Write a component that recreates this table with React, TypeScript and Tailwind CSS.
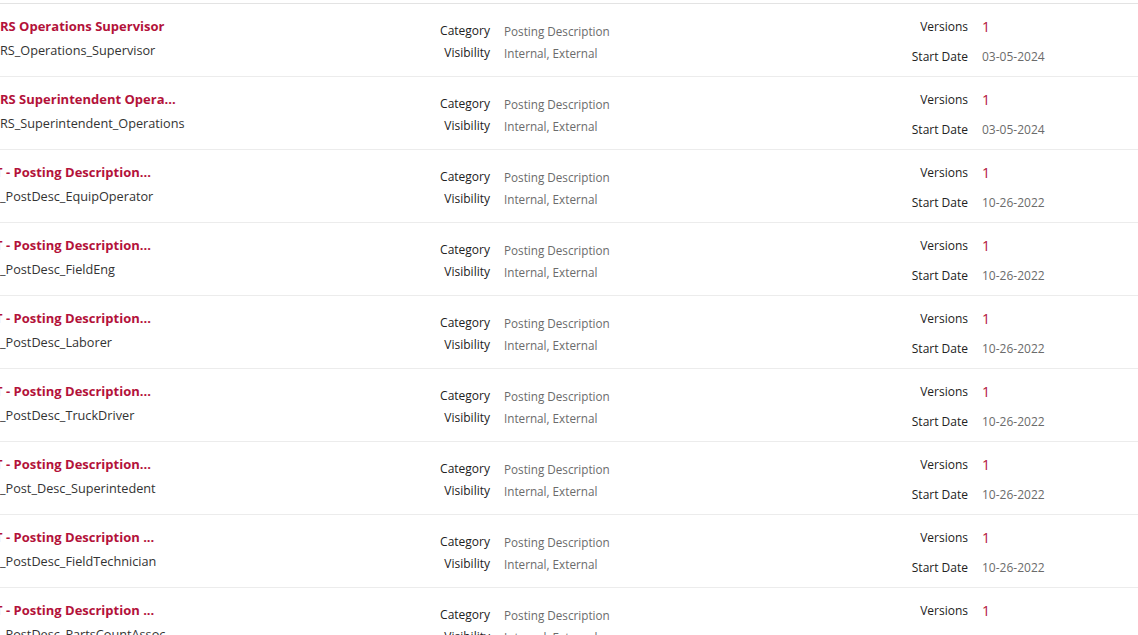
const rows = [
  { title: "RS Operations Supervisor", code: "RS_Operations_Supervisor", date: "03-05-2024", shift: "" },
  { title: "RS Superintendent Opera...", code: "RS_Superintendent_Operations", date: "03-05-2024", shift: "" },
  { title: "T - Posting Description...", code: "_PostDesc_EquipOperator", date: "10-26-2022", shift: "-ml-[5px]" },
  { title: "T - Posting Description...", code: "_PostDesc_FieldEng", date: "10-26-2022", shift: "-ml-[5px]" },
  { title: "T - Posting Description...", code: "_PostDesc_Laborer", date: "10-26-2022", shift: "-ml-[5px]" },
  { title: "T - Posting Description...", code: "_PostDesc_TruckDriver", date: "10-26-2022", shift: "-ml-[5px]" },
  { title: "T - Posting Description...", code: "_Post_Desc_Superintedent", date: "10-26-2022", shift: "-ml-[5px]" },
  { title: "T - Posting Description ...", code: "_PostDesc_FieldTechnician", date: "10-26-2022", shift: "-ml-[5px]" },
  { title: "T - Posting Description ...", code: "_PostDesc_PartsCountAssoc", date: "10-26-2022", shift: "-ml-[5px]" },
];

export default function App() {
  return (
    <div className="h-[635px] w-[1138px] overflow-hidden bg-white font-['Open_Sans',sans-serif] text-[#222]">
      <div className="h-[3px]" />
      <div className="border-t border-[#e3e3e3]">
        {rows.map((r, i) => (
          <div key={i} className="flex h-[73px] border-b border-[#ececec] overflow-hidden">
            {/* name */}
            <div className="w-[430px] shrink-0 overflow-hidden pt-[12px]">
              <div className={"text-[13px] leading-[20px] font-bold text-[#b3123a] whitespace-nowrap " + r.shift}>{r.title}</div>
              <div className="mt-[4px] text-[12.7px] leading-[20px] text-[#333] whitespace-nowrap">{r.code}</div>
            </div>
            {/* category / visibility */}
            <div className="w-[458px] shrink-0 pt-[16px]">
              <div className="grid grid-cols-[60px_1fr] gap-x-[14px] text-[12px] leading-[22px]">
                <span className="text-right text-[#222]">Category</span>
                <span className="text-[11.7px] text-[#6b6b6b]">Posting Description</span>
                <span className="text-right text-[#222]">Visibility</span>
                <span className="text-[11.7px] text-[#6b6b6b]">Internal, External</span>
              </div>
            </div>
            {/* versions / date */}
            <div className="flex-1 pt-[8px]">
              <div className="grid grid-cols-[80px_1fr] gap-x-[14px] text-[12px] leading-[30px]">
                <span className="text-right text-[#222]">Versions</span>
                <span className="text-[14px] text-[#b3123a]">1</span>
                <span className="text-right text-[#222]">Start Date</span>
                <span className="text-[#6b6b6b]">{r.date}</span>
              </div>
            </div>
          </div>
        ))}
      </div>
    </div>
  );
}
